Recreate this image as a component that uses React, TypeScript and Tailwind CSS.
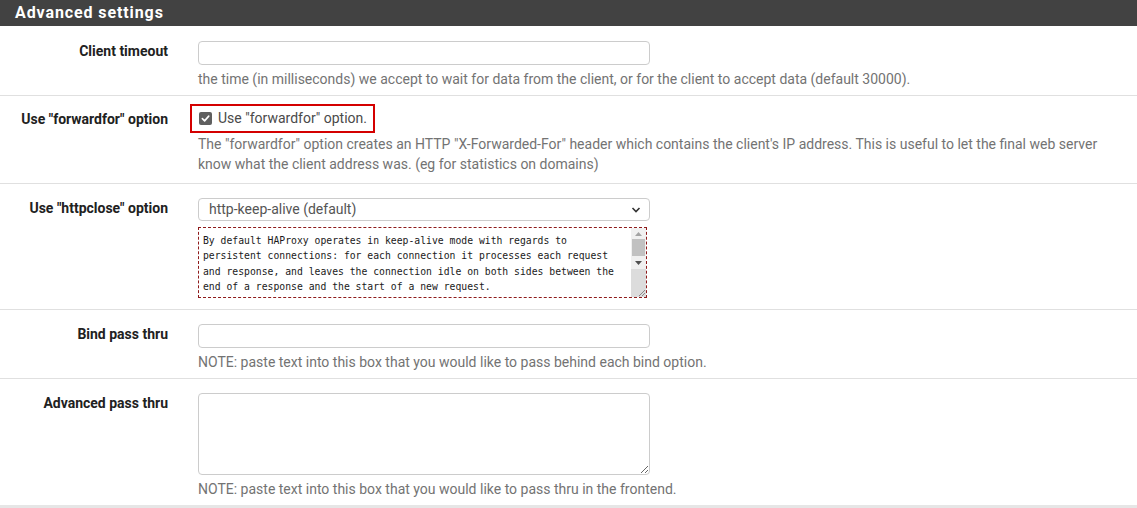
import React from 'react';

const font = { fontFamily: 'Roboto, "Noto Sans", Arial, sans-serif' };

function Row({ label, labelPad = 'pt-[0px]', className = '', children }: { label: string; labelPad?: string; className?: string; children: React.ReactNode }) {
  return (
    <div className={`flex border-b border-[#e0e0e0] ${className}`}>
      <div className={`w-[183px] shrink-0 pr-[15px] text-right text-[14px] leading-[20px] font-bold text-[#212121] ${labelPad}`}>
        {label}
      </div>
      <div className="flex-1 pl-[15px] pr-[15px]">{children}</div>
    </div>
  );
}

function Help({ children }: { children: React.ReactNode }) {
  return <div className="text-[14px] leading-[20px] text-[#737373]">{children}</div>;
}

export default function App() {
  return (
    <div className="w-[1137px] h-[508px] bg-white overflow-hidden" style={font}>
      <div className="h-[26px] bg-[#424242] px-[15px] flex items-center">
        <h2 className="text-white text-[16px] font-bold tracking-[0.9px]">Advanced settings</h2>
      </div>

      <Row label="Client timeout" className="pt-[15px] pb-[6px]">
        <input type="text" className="block w-[452px] h-[24px] border border-[#cccccc] rounded-[4px] px-2 text-[14px] outline-none" />
        <div className="mt-[4px]">
          <Help>the time (in milliseconds) we accept to wait for data from the client, or for the client to accept data (default 30000).</Help>
        </div>
      </Row>

      <Row label={'Use "forwardfor" option'} className="pt-[8px] pb-[9px]" labelPad="pt-[5px]">
        <label className="ml-[-8px] inline-flex items-center h-[29px] w-[185px] border-2 border-[#d40000] pl-[7px]">
          <span className="w-[13px] h-[13px] rounded-[2px] bg-[#5f5f5f] flex items-center justify-center">
            <svg width="9" height="9" viewBox="0 0 10 10" fill="none">
              <path d="M1.5 5.2 L4 7.6 L8.6 2.4" stroke="white" strokeWidth="1.8" strokeLinecap="round" strokeLinejoin="round" />
            </svg>
          </span>
          <span className="ml-[6px] text-[14px] text-[#4a4a4a]">Use "forwardfor" option.</span>
        </label>
        <div className="mt-[1px]">
          <Help>
            The "forwardfor" option creates an HTTP "X-Forwarded-For" header which contains the client's IP address. This is useful to let the final web server know what the client address was. (eg for statistics on domains)
          </Help>
        </div>
      </Row>

      <Row label={'Use "httpclose" option'} className="pt-[14px] pb-[11px]">
        <div className="relative w-[452px] h-[23px] border border-[#cccccc] rounded-[4px] flex items-center pl-[10px] text-[14px] text-[#555555]">
          http-keep-alive (default)
          <svg className="absolute right-[8px] top-[7px]" width="10" height="8" viewBox="0 0 10 8" fill="none">
            <path d="M1.5 2 L5 5.5 L8.5 2" stroke="#333" strokeWidth="1.6" />
          </svg>
        </div>
        <div className="mt-[6px] w-[449px] h-[71px] border border-dashed border-[#8e1b1b] flex">
          <div
            className="flex-1 pl-[4px] pt-[5px] text-[9.75px] leading-[15.3px] text-[#1a1a1a] overflow-hidden whitespace-nowrap"
            style={{ fontFamily: '"DejaVu Sans Mono", "Liberation Mono", monospace' }}
          >
            By default HAProxy operates in keep-alive mode with regards to<br />
            persistent connections: for each connection it processes each request<br />
            and response, and leaves the connection idle on both sides between the<br />
            end of a response and the start of a new request.
          </div>
          <div className="w-[15px] flex flex-col bg-[#f0f0f0]">
            <div className="h-[11px] flex items-center justify-center">
              <svg width="7" height="4" viewBox="0 0 7 4"><path d="M0 4 L3.5 0 L7 4 Z" fill="#a3a3a3" /></svg>
            </div>
            <div className="mx-[1px] h-[17px] bg-[#c1c1c1]" />
            <div className="h-[13px] flex items-center justify-center">
              <svg width="7" height="4" viewBox="0 0 7 4"><path d="M0 0 L3.5 4 L7 0 Z" fill="#505050" /></svg>
            </div>
            <div className="flex-1 bg-[#dcdcdc] flex items-end justify-end">
              <svg width="10" height="10" viewBox="0 0 10 10">
                <path d="M9 3 L3 9 M9 6 L6 9" stroke="#8a8a8a" strokeWidth="1" />
              </svg>
            </div>
          </div>
        </div>
      </Row>

      <Row label="Bind pass thru" className="pt-[14px] pb-[6px]">
        <input type="text" className="block w-[452px] h-[24px] border border-[#cccccc] rounded-[4px] px-2 text-[14px] outline-none" />
        <div className="mt-[4px]">
          <Help>NOTE: paste text into this box that you would like to pass behind each bind option.</Help>
        </div>
      </Row>

      <Row label="Advanced pass thru" className="pt-[14px] pb-[6px] border-b-0">
        <textarea className="block w-[452px] h-[82px] border border-[#cccccc] rounded-[4px] p-2 text-[14px] outline-none resize" />
        <div className="mt-[4px]">
          <Help>NOTE: paste text into this box that you would like to pass thru in the frontend.</Help>
        </div>
      </Row>
      <div className="h-[3px] bg-[#e6e6e6]" />
    </div>
  );
}
